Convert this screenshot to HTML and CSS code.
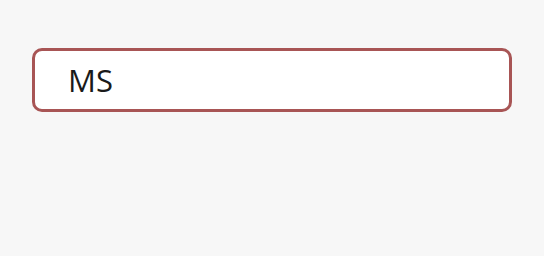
FILE: index.html
```html
<!DOCTYPE html>
<html lang="en">
<head>
    <meta charset="UTF-8">
    <meta name="viewport" content="width=device-width, initial-scale=1.0">
    <title>Input</title>
    <link rel="stylesheet" href="styles.css">
</head>
<body>
    <div class="field">
        <input type="text" class="text-input" value="MS">
    </div>
</body>
</html>
```

FILE: styles.css
```css
body {
    font-family: 'Open Sans', sans-serif;
    background-color: #f7f7f7;
    margin: 0;
    padding: 48px 32px;
}
.field {
    width: 480px;
}
.text-input {
    display: block;
    width: 100%;
    height: 64px;
    box-sizing: border-box;
    padding: 0 33px;
    border: 3px solid #a85555;
    border-radius: 10px;
    background-color: white;
    font-family: 'Open Sans', sans-serif;
    font-size: 31px;
    color: #1a1a1a;
    outline: none;
}
```
